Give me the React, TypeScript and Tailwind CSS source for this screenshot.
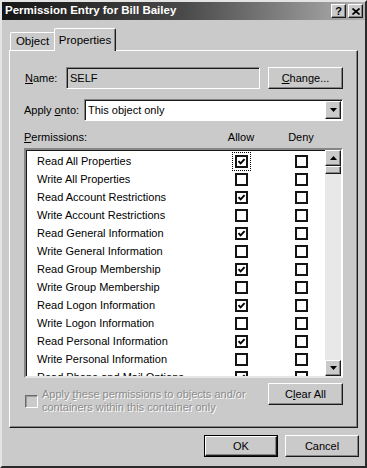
import React from 'react';

const raised = 'bg-[#cacaca] border border-t-white border-l-white border-r-[#1a1a1a] border-b-[#1a1a1a] shadow-[inset_-1px_-1px_0_#858585]';
const sunken = 'border border-t-[#858585] border-l-[#858585] border-r-white border-b-white shadow-[inset_1px_1px_0_#1a1a1a]';

const ROWS: [string, boolean][] = [
  ['Read All Properties', true],
  ['Write All Properties', false],
  ['Read Account Restrictions', true],
  ['Write Account Restrictions', false],
  ['Read General Information', true],
  ['Write General Information', false],
  ['Read Group Membership', true],
  ['Write Group Membership', false],
  ['Read Logon Information', true],
  ['Write Logon Information', false],
  ['Read Personal Information', true],
  ['Write Personal Information', false],
  ['Read Phone and Mail Options', true],
];

const Check = () => (
  <svg width="9" height="9" viewBox="0 0 9 9">
    <path d="M1.5 4.2 L3.6 6.4 L7.6 2.2" fill="none" stroke="#000" strokeWidth="1.9" />
  </svg>
);

const Box: React.FC<{ checked?: boolean }> = ({ checked }) => (
  <span className="w-[13px] h-[13px] border-2 border-[#141414] bg-white flex items-center justify-center shrink-0">
    {checked && <Check />}
  </span>
);

const Arrow: React.FC<{ down?: boolean }> = ({ down }) => (
  <svg width="7" height="4" viewBox="0 0 7 4">
    <path d={down ? 'M0 0 H7 L3.5 4 Z' : 'M0 4 H7 L3.5 0 Z'} fill="#000" />
  </svg>
);

const Button: React.FC<{ children: React.ReactNode; className?: string }> = ({ children, className = '' }) => (
  <div className={`${raised} h-[22px] flex items-center justify-center ${className}`}>{children}</div>
);

export default function App() {
  return (
    <div className="w-[367px] h-[468px] bg-[#cacaca] border-2 border-t-[#e4e4e4] border-l-[#e4e4e4] border-r-[#2a2a2a] border-b-[#2a2a2a] flex flex-col font-['Liberation_Sans',Arial,sans-serif] text-[11px] text-black select-none">
      {/* Title bar */}
      <div className="h-[18px] flex items-center justify-between bg-linear-to-r from-[#161616] via-[#4a4a4a] to-[#b2b2b2]">
        <span className="pl-[3px] text-white font-bold text-[11.5px]">Permission Entry for Bill Bailey</span>
        <div className="flex gap-[2px] mr-[2px]">
          <div className={`${raised} w-[15px] h-[14px] flex items-center justify-center font-bold text-[11px] leading-none`}>?</div>
          <div className={`${raised} w-[15px] h-[14px] flex items-center justify-center`}>
            <svg width="8" height="7" viewBox="0 0 8 7">
              <path d="M0.5 0.5 L7.5 6.5 M7.5 0.5 L0.5 6.5" stroke="#000" strokeWidth="1.7" />
            </svg>
          </div>
        </div>
      </div>

      {/* Tabs */}
      <div className="flex items-end h-[22px] mt-[8px] ml-[8px]">
        <div className="w-[44px] h-[18px] bg-[#cacaca] border-t border-l border-t-white border-l-white rounded-tl-[2px] flex items-center justify-center text-[11.5px]">
          Object
        </div>
        <div className="relative z-10 -mb-px w-[62px] h-[23px] bg-[#cacaca] border-t border-l border-r border-t-white border-l-white border-r-[#1a1a1a] rounded-t-[2px] shadow-[inset_-1px_0_0_#858585] flex items-start justify-center pt-[3px] text-[11.5px]">
          Properties
        </div>
      </div>

      {/* Panel */}
      <div className="ml-[7px] w-[349px] h-[378px] border border-t-white border-l-white border-r-[#1a1a1a] border-b-[#1a1a1a] shadow-[inset_-1px_-1px_0_#858585] px-[14px] pt-[16px] flex flex-col">
        <div className="flex items-center h-[22px]">
          <span className="w-[42px] pl-px"><u>N</u>ame:</span>
          <div className={`${sunken} w-[194px] h-[22px] bg-[#cacaca] flex items-center pl-[3px]`}>SELF</div>
          <Button className="w-[75px] ml-[8px]"><span><u>C</u>hange...</span></Button>
        </div>

        <div className="flex items-center h-[22px] mt-[10px]">
          <span className="w-[60px]">Apply <u>o</u>nto:</span>
          <div className={`${sunken} w-[259px] h-[22px] bg-white flex items-center justify-between pl-[3px] pr-[1px]`}>
            <span>This object only</span>
            <div className={`${raised} w-[16px] h-[18px] flex items-center justify-center`}><Arrow down /></div>
          </div>
        </div>

        <div className="flex items-center h-[16px] mt-[8px]">
          <span className="w-[197px]"><u>P</u>ermissions:</span>
          <span className="w-[40px] text-center">Allow</span>
          <span className="w-[20px]" />
          <span className="w-[40px] text-center">Deny</span>
        </div>

        {/* Permission list */}
        <div className="mt-[3px] w-[319px] h-[230px] border-2 border-t-[#858585] border-l-[#858585] border-r-white border-b-[#e6e6e6] shadow-[inset_1px_1px_0_#1a1a1a] bg-white flex">
          <div className="flex-1 overflow-hidden pt-[2px]">
            {ROWS.map(([label, allow], i) => (
              <div key={label} className="h-[18px] pl-[11px] flex items-center">
                <span className="w-[198px] whitespace-nowrap">{label}</span>
                {i === 0 ? (
                  <span className="outline outline-dotted outline-offset-2 outline-black">
                    <Box checked={allow} />
                  </span>
                ) : (
                  <Box checked={allow} />
                )}
                <span className="w-[47px]" />
                <Box />
              </div>
            ))}
          </div>
          <div className="w-[16px] flex flex-col bg-[#e8e8e8]">
            <div className={`${raised} h-[16px] flex items-center justify-center`}><Arrow /></div>
            <div className={`${raised} h-[8px]`} />
            <div className="flex-1" />
            <div className={`${raised} h-[16px] flex items-center justify-center`}><Arrow down /></div>
          </div>
        </div>

        <div className="flex justify-between items-start mt-[5px]">
          <div className="flex items-center mt-[5px] ml-px">
            <span className="w-[13px] h-[13px] border border-t-[#6a6a6a] border-l-[#6a6a6a] border-r-white border-b-white shadow-[inset_1px_1px_0_#9a9a9a] shrink-0" />
            <span className="ml-[4px] leading-[13px] text-[#8c8c8c] [text-shadow:1px_1px_0_#fff]">
              Apply <u>t</u>hese permissions to objects and/or
              <br />
              containers within this container only
            </span>
          </div>
          <Button className="w-[75px]"><span>C<u>l</u>ear All</span></Button>
        </div>
      </div>

      {/* Dialog buttons */}
      <div className="flex justify-end gap-[7px] mt-[7px] pr-[6px]">
        <div className="w-[74px] h-[22px] border border-black">
          <div className={`${raised} w-full h-full flex items-center justify-center`}>OK</div>
        </div>
        <Button className="w-[74px]">Cancel</Button>
      </div>
    </div>
  );
}
